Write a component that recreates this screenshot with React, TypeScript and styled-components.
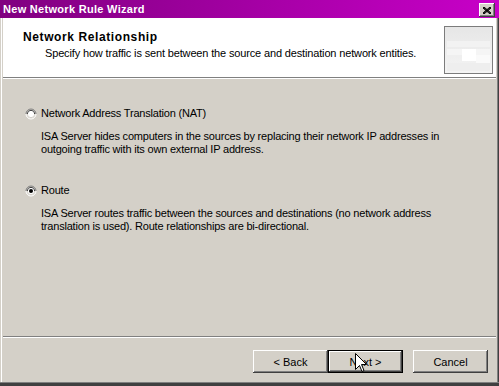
import React from 'react';
import styled, { createGlobalStyle } from 'styled-components';

const GlobalStyle = createGlobalStyle`
  html, body {
    margin: 0;
    padding: 0;
    background: #d4d0c8;
  }
  body {
    font-family: "Liberation Sans", Arial, sans-serif;
    font-size: 11px;
    color: #000;
  }
`;

const Window = styled.div`
  position: relative;
  width: 499px;
  height: 386px;
  box-sizing: border-box;
  display: flex;
  flex-direction: column;
  padding: 0 3px 4px 3px;
  background: #d4d0c8;
  box-shadow:
    inset 0 -1px #404040,
    inset 0 -2px #404040,
    inset 0 -3px #404040,
    inset 0 -4px #808080,
    inset -1px 0 #404040,
    inset -2px 0 #808080,
    inset 1px 0 #d4d0c8,
    inset 2px 0 #ffffff;
  overflow: hidden;
`;

const TitleBar = styled.div`
  height: 18px;
  margin: 0 -3px;
  padding: 0 4px 0 3px;
  display: flex;
  align-items: center;
  justify-content: space-between;
  background: linear-gradient(to right, #800080 0%, #a000a0 45%, #c800c8 100%);
`;

const TitleText = styled.span`
  color: #fff;
  font-weight: bold;
  font-size: 11px;
  letter-spacing: 0.3px;
`;

const CloseButton = styled.div`
  width: 16px;
  height: 14px;
  box-sizing: border-box;
  margin-top: 2px;
  background: #d4d0c8;
  box-shadow: inset -1px -1px #404040, inset 1px 1px #fff, inset -2px -2px #808080;
  display: flex;
  align-items: center;
  justify-content: center;
`;

const Header = styled.div`
  height: 59px;
  background: #fff;
  display: flex;
  justify-content: space-between;
  padding: 0 3px 0 20px;
  box-sizing: border-box;
`;

const HeaderText = styled.div`
  display: flex;
  flex-direction: column;
  padding-top: 13px;
`;

const HeaderTitle = styled.div`
  font-weight: bold;
  font-size: 12px;
  letter-spacing: 0.6px;
  line-height: 13px;
`;

const HeaderSub = styled.div`
  line-height: 13px;
  margin-top: 3px;
  padding-left: 22px;
  letter-spacing: -0.15px;
`;

const HeaderIcon = styled.div`
  width: 49px;
  height: 48px;
  margin-top: 8px;
  box-sizing: border-box;
  border: 1px solid #7c7c7c;
  background: #f0f0f0;
`;

const Etched = styled.div`
  height: 2px;
  flex: none;
  border-top: 1px solid #808080;
  border-bottom: 1px solid #fff;
  box-sizing: border-box;
`;

const Body = styled.div`
  flex: 1;
  padding: 28px 0 0 22px;
  display: flex;
  flex-direction: column;
  letter-spacing: -0.2px;
`;

const Option = styled.div<{ $gap: number }>`
  margin-top: ${p => p.$gap}px;
  display: flex;
  align-items: center;
  gap: 4px;
  line-height: 13px;
`;

const Desc = styled.div`
  margin-top: 10px;
  padding-left: 16px;
  line-height: 13px;
  width: 420px;
`;

const Footer = styled.div`
  height: 44px;
  display: flex;
  justify-content: flex-end;
  align-items: flex-start;
  padding: 12px 8px 0 0;
  box-sizing: border-box;
`;

const ButtonGroup = styled.div`
  display: flex;
`;

const WizButton = styled.div<{ $default?: boolean; $gapLeft?: number }>`
  width: 75px;
  height: 23px;
  box-sizing: border-box;
  margin-left: ${p => p.$gapLeft ?? 0}px;
  display: flex;
  align-items: center;
  justify-content: center;
  background: #d4d0c8;
  box-shadow: ${p =>
    p.$default
      ? 'inset 0 0 0 1px #000, inset -2px -2px #404040, inset 2px 2px #fff, inset -3px -3px #808080'
      : 'inset -1px -1px #404040, inset 1px 1px #fff, inset -2px -2px #808080'};
`;

const Cursor = styled.svg`
  position: absolute;
  left: 355px;
  top: 353px;
`;

const RadioIcon = ({ checked }: { checked?: boolean }) => (
  <svg width="12" height="12" viewBox="0 0 12 12">
    <path d="M11 6 A5 5 0 0 1 1 6" fill="none" stroke="#ffffff" strokeWidth="1" />
    <path d="M1 6 A5 5 0 0 1 11 6" fill="none" stroke="#808080" strokeWidth="1" />
    <circle cx="6" cy="6" r="4" fill="#fff" />
    <path d="M2.3 6 A3.7 3.7 0 0 1 9.7 6" fill="none" stroke="#404040" strokeWidth="1" />
    <path d="M9.7 6 A3.7 3.7 0 0 1 2.3 6" fill="none" stroke="#d4d0c8" strokeWidth="1" />
    {checked && <circle cx="6" cy="6" r="2" fill="#000" />}
  </svg>
);

const App = () => (
  <>
    <GlobalStyle />
    <Window>
      <TitleBar>
        <TitleText>New Network Rule Wizard</TitleText>
        <CloseButton>
          <svg width="8" height="7" viewBox="0 0 8 7">
            <path d="M0 0 L8 7 M1 0 L8 6 M0 1 L7 7 M8 0 L0 7 M7 0 L0 6 M8 1 L1 7" stroke="#000" strokeWidth="1" />
          </svg>
        </CloseButton>
      </TitleBar>
      <Header>
        <HeaderText>
          <HeaderTitle>Network Relationship</HeaderTitle>
          <HeaderSub>Specify how traffic is sent between the source and destination network entities.</HeaderSub>
        </HeaderText>
        <HeaderIcon>
          <svg width="47" height="46" viewBox="0 0 47 46">
            <defs>
              <linearGradient id="fade" x1="0" y1="0" x2="0" y2="1">
                <stop offset="0" stopColor="#e6e6e6" />
                <stop offset="1" stopColor="#f4f4f4" />
              </linearGradient>
            </defs>
            <rect width="47" height="46" fill="url(#fade)" />
            <rect x="2" y="14" width="43" height="6" fill="#f2f2f2" />
            <rect x="2" y="22" width="43" height="6" fill="#f5f5f5" />
            <rect x="17" y="22" width="14" height="12" fill="#ffffff" />
            <rect x="31" y="28" width="14" height="8" fill="#fafafa" />
            <rect x="2" y="36" width="43" height="8" fill="#eeeeee" />
          </svg>
        </HeaderIcon>
      </Header>
      <Etched />
      <Body>
        <Option $gap={0}>
          <RadioIcon />
          <span>Network Address Translation (NAT)</span>
        </Option>
        <Desc>
          ISA Server hides computers in the sources by replacing their network IP addresses in
          outgoing traffic with its own external IP address.
        </Desc>
        <Option $gap={28}>
          <RadioIcon checked />
          <span>Route</span>
        </Option>
        <Desc>
          ISA Server routes traffic between the sources and destinations (no network address
          translation is used). Route relationships are bi-directional.
        </Desc>
      </Body>
      <Etched />
      <Footer>
        <ButtonGroup>
          <WizButton>&lt; Back</WizButton>
          <WizButton $default>Next &gt;</WizButton>
          <WizButton $gapLeft={10}>Cancel</WizButton>
        </ButtonGroup>
      </Footer>
      <Cursor width="12" height="20" viewBox="0 0 12 20">
        <path d="M0.5 0.5 L0.5 16.5 L4.5 12.5 L7 18.5 L9 17.5 L6.5 11.5 L11.5 11.5 Z" fill="#fff" stroke="#000" strokeWidth="1" />
      </Cursor>
    </Window>
  </>
);

export default App;
